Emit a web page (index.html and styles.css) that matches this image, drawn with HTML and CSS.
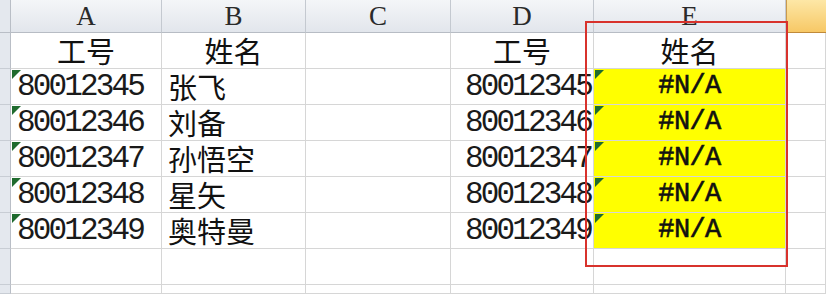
FILE: index.html
```html
<!DOCTYPE html>
<html lang="zh">
<head>
<meta charset="utf-8">
<link rel="stylesheet" href="styles.css">
</head>
<body>
<div class="sheet">
  <div class="corner"></div>
  <div class="colhdr">A</div>
  <div class="colhdr">B</div>
  <div class="colhdr">C</div>
  <div class="colhdr">D</div>
  <div class="colhdr">E</div>
  <div class="colhdr sel"></div>

  <div class="rowhdr"></div>
  <div class="cell cjk center">工号</div>
  <div class="cell cjk center">姓名</div>
  <div class="cell"></div>
  <div class="cell cjk center">工号</div>
  <div class="cell cjk center">姓名</div>
  <div class="cell"></div>

  <div class="rowhdr"></div>
  <div class="cell num tri">80012345</div>
  <div class="cell cjk">张飞</div>
  <div class="cell"></div>
  <div class="cell num right">80012345</div>
  <div class="cell na tri">#N/A</div>
  <div class="cell"></div>

  <div class="rowhdr"></div>
  <div class="cell num tri">80012346</div>
  <div class="cell cjk">刘备</div>
  <div class="cell"></div>
  <div class="cell num right">80012346</div>
  <div class="cell na tri">#N/A</div>
  <div class="cell"></div>

  <div class="rowhdr"></div>
  <div class="cell num tri">80012347</div>
  <div class="cell cjk">孙悟空</div>
  <div class="cell"></div>
  <div class="cell num right">80012347</div>
  <div class="cell na tri">#N/A</div>
  <div class="cell"></div>

  <div class="rowhdr"></div>
  <div class="cell num tri">80012348</div>
  <div class="cell cjk">星矢</div>
  <div class="cell"></div>
  <div class="cell num right">80012348</div>
  <div class="cell na tri">#N/A</div>
  <div class="cell"></div>

  <div class="rowhdr"></div>
  <div class="cell num tri">80012349</div>
  <div class="cell cjk">奥特曼</div>
  <div class="cell"></div>
  <div class="cell num right">80012349</div>
  <div class="cell na tri">#N/A</div>
  <div class="cell"></div>

  <div class="rowhdr"></div>
  <div class="cell"></div>
  <div class="cell"></div>
  <div class="cell"></div>
  <div class="cell"></div>
  <div class="cell"></div>
  <div class="cell"></div>

  <div class="rowhdr"></div>
  <div class="cell"></div>
  <div class="cell"></div>
  <div class="cell"></div>
  <div class="cell"></div>
  <div class="cell"></div>
  <div class="cell"></div>

  <div class="redbox"></div>
</div>
</body>
</html>
```

FILE: styles.css
```css
html, body {
  margin: 0;
  padding: 0;
  background: #ffffff;
}

.sheet {
  position: relative;
  width: 826px;
  height: 294px;
  overflow: hidden;
  display: grid;
  grid-template-columns: 11px 151px 144px 145px 143px 192px 40px;
  grid-template-rows: 33px repeat(7, 36px) 1fr;
  background: #ffffff;
}

.corner {
  background: #e4e8ee;
  border-right: 1px solid #b9bec6;
  border-bottom: 1px solid #b9bec6;
}

.colhdr {
  background: linear-gradient(#f4f6f8, #e2e6ec);
  border-right: 1px solid #c4c9d0;
  border-bottom: 1px solid #b7bcc4;
  display: flex;
  justify-content: center;
  align-items: flex-end;
  padding-bottom: 1px;
  font-family: "Liberation Serif", serif;
  font-size: 27px;
  line-height: 30px;
  color: #2a2a2a;
}

.colhdr.sel {
  background: linear-gradient(#fde7a6, #f7c866);
  border-right: none;
  border-left: 1px solid #c99a4e;
  border-bottom: 1px solid #c08a3a;
}

.rowhdr {
  background: #e4e8ee;
  border-right: 1px solid #b9bec6;
  border-bottom: 1px solid #c8cdd4;
}

.cell {
  position: relative;
  border-right: 1px solid #d6d6d6;
  border-bottom: 1px solid #d6d6d6;
  display: flex;
  align-items: flex-end;
  padding: 0 5px 1px 5px;
  white-space: nowrap;
  color: #111111;
}

.cjk {
  font-family: "Noto Sans CJK SC", sans-serif;
  font-size: 29px;
  line-height: 33px;
  padding-left: 6px;
}

.center {
  justify-content: center;
  padding-left: 0;
  padding-right: 0;
}

.num {
  font-family: "Liberation Mono", monospace;
  font-size: 31px;
  letter-spacing: -2.85px;
  line-height: 31px;
  padding-left: 6px;
  padding-bottom: 2px;
  color: #1a1a1a;
}

.right {
  justify-content: flex-end;
  padding-right: 2px;
}

.na {
  background: #ffff00;
  justify-content: center;
  font-family: "Liberation Mono", monospace;
  font-size: 27px;
  -webkit-text-stroke: 0.6px #111111;
  letter-spacing: -0.6px;
  line-height: 30px;
  padding-bottom: 3px;
}

.tri::before {
  content: "";
  position: absolute;
  left: 1px;
  top: 1px;
  width: 0;
  height: 0;
  border-top: 9px solid #1f6b2e;
  border-right: 9px solid transparent;
}

.redbox {
  position: absolute;
  left: 585px;
  top: 21px;
  width: 199px;
  height: 242px;
  border: 2px solid #d8322c;
  pointer-events: none;
}
```
